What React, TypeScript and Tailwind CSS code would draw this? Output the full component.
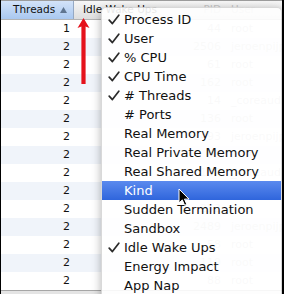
import { ReactNode } from "react";

const rows = [
  { threads: 1, pid: "44", user: "root" },
  { threads: 2, pid: "2506", user: "jeroenpijpers" },
  { threads: 2, pid: "61", user: "root" },
  { threads: 2, pid: "162", user: "root" },
  { threads: 2, pid: "14", user: "_coreaudiod" },
  { threads: 2, pid: "136", user: "root" },
  { threads: 2, pid: "2493", user: "jeroenpijpers" },
  { threads: 2, pid: "98", user: "root" },
  { threads: 2, pid: "187", user: "_coreaudiod" },
  { threads: 2, pid: "71", user: "root" },
  { threads: 2, pid: "252", user: "root" },
  { threads: 2, pid: "2489", user: "jeroenpijpers" },
  { threads: 2, pid: "58", user: "root" },
  { threads: 2, pid: "119", user: "root" },
  { threads: 2, pid: "88", user: "root" },
];

const menuItems = [
  { label: "Process ID", checked: true },
  { label: "User", checked: true },
  { label: "% CPU", checked: true },
  { label: "CPU Time", checked: true },
  { label: "# Threads", checked: true },
  { label: "# Ports", checked: false },
  { label: "Real Memory", checked: false },
  { label: "Real Private Memory", checked: false },
  { label: "Real Shared Memory", checked: false },
  { label: "Kind", checked: false, active: true },
  { label: "Sudden Termination", checked: false },
  { label: "Sandbox", checked: false },
  { label: "Idle Wake Ups", checked: true },
  { label: "Energy Impact", checked: false },
  { label: "App Nap", checked: false },
];

function Check() {
  return (
    <svg width="12" height="11" viewBox="0 0 12 11" className="block">
      <path d="M1.2 6.2 L4.4 9.6 L10.8 1.2" fill="none" stroke="#2a2a2a" strokeWidth="1.7" strokeLinecap="round" strokeLinejoin="round" />
    </svg>
  );
}

function MenuRow({ label, checked, active }: { label: string; checked: boolean; active?: boolean }) {
  return (
    <div
      className={`flex items-center h-[19px] ${
        active ? "bg-gradient-to-b from-[#5b8aee] to-[#2f65dc] text-white" : "text-[#111]"
      }`}
    >
      <div className="w-[22px] shrink-0 pl-[6px]">{checked && <Check />}</div>
      <span className="whitespace-nowrap">{label}</span>
    </div>
  );
}

function HeaderCell({ children, className }: { children?: ReactNode; className: string }) {
  return <div className={`h-full flex items-center overflow-hidden whitespace-nowrap ${className}`}>{children}</div>;
}

export default function App() {
  return (
    <div
      className="relative w-[284px] h-[294px] overflow-hidden bg-white border-l border-l-black border-r-2 border-r-black flex flex-col"
      style={{ fontFamily: '"DejaVu Sans", Verdana, sans-serif' }}
    >
      {/* Column header */}
      <div className="h-[20px] shrink-0 flex border-t border-t-[#9c9c9c] border-b border-b-[#b4b4b4] bg-gradient-to-b from-[#f6f6f6] to-[#dedede] text-[10.5px] text-[#111]">
        <HeaderCell className="w-[73px] shrink-0 bg-gradient-to-b from-[#d3e3f8] to-[#a9c8f0] border-r border-r-[#95a9c4] pl-[12px] justify-between pr-[6px]">
          <span>Threads</span>
          <svg width="7" height="6" viewBox="0 0 7 6">
            <path d="M3.5 0 L7 6 L0 6 Z" fill="#5f7590" />
          </svg>
        </HeaderCell>
        <HeaderCell className="w-[105px] shrink-0 pl-[9px]">Idle Wake Ups</HeaderCell>
        <HeaderCell className="w-[42px] shrink-0 justify-end text-[#c4c4c4]">PID</HeaderCell>
        <HeaderCell className="flex-1 pl-[10px] text-[#c4c4c4]">User</HeaderCell>
      </div>

      {/* Rows */}
      <div className="flex-1 flex flex-col text-[11px] text-[#111]">
        {rows.map((r, i) => (
          <div key={i} className={`h-[18px] shrink-0 flex items-center ${i % 2 === 1 ? "bg-[#f0f4fa]" : "bg-white"}`}>
            <div className="w-[73px] shrink-0 text-right pr-[4px]">{r.threads}</div>
            <div className="w-[105px] shrink-0" />
            <div className="w-[42px] shrink-0 text-right text-[#c4c4c4]">{r.pid}</div>
            <div className="flex-1 min-w-0 pl-[10px] text-[#c4c4c4] whitespace-nowrap overflow-hidden">{r.user}</div>
          </div>
        ))}
      </div>

      {/* Bottom edge */}
      <div className="h-[4px] shrink-0 border-t border-t-[#a6a6a6] bg-[#e4e4e4]" />

      {/* Red arrow pointing at the Idle column */}
      <svg className="absolute left-[75px] top-[17px]" width="15" height="68" viewBox="0 0 15 68">
        <path d="M7.5 1 L13.5 11 L9.6 9.6 L9.6 67 L5.4 67 L5.4 9.6 L1.5 11 Z" fill="#e5121c" />
      </svg>

      {/* Column chooser menu */}
      <div className="absolute left-[100px] top-[7px] w-[181px] h-[300px] pt-[2px] rounded-t-[5px] bg-white/[0.9] border border-black/15 shadow-[0_3px_10px_rgba(0,0,0,0.3)] text-[13px]">
        {menuItems.map((m) => (
          <MenuRow key={m.label} label={m.label} checked={m.checked} active={m.active} />
        ))}
      </div>

      {/* Mouse pointer */}
      <svg className="absolute left-[177px] top-[188px]" width="12" height="19" viewBox="0 0 12 19">
        <path
          d="M1 1 L1 15 L4.3 11.9 L6.6 17.3 L8.8 16.4 L6.5 11.1 L11 11.1 Z"
          fill="#000"
          stroke="#fff"
          strokeWidth="1"
          strokeLinejoin="round"
        />
      </svg>
    </div>
  );
}
